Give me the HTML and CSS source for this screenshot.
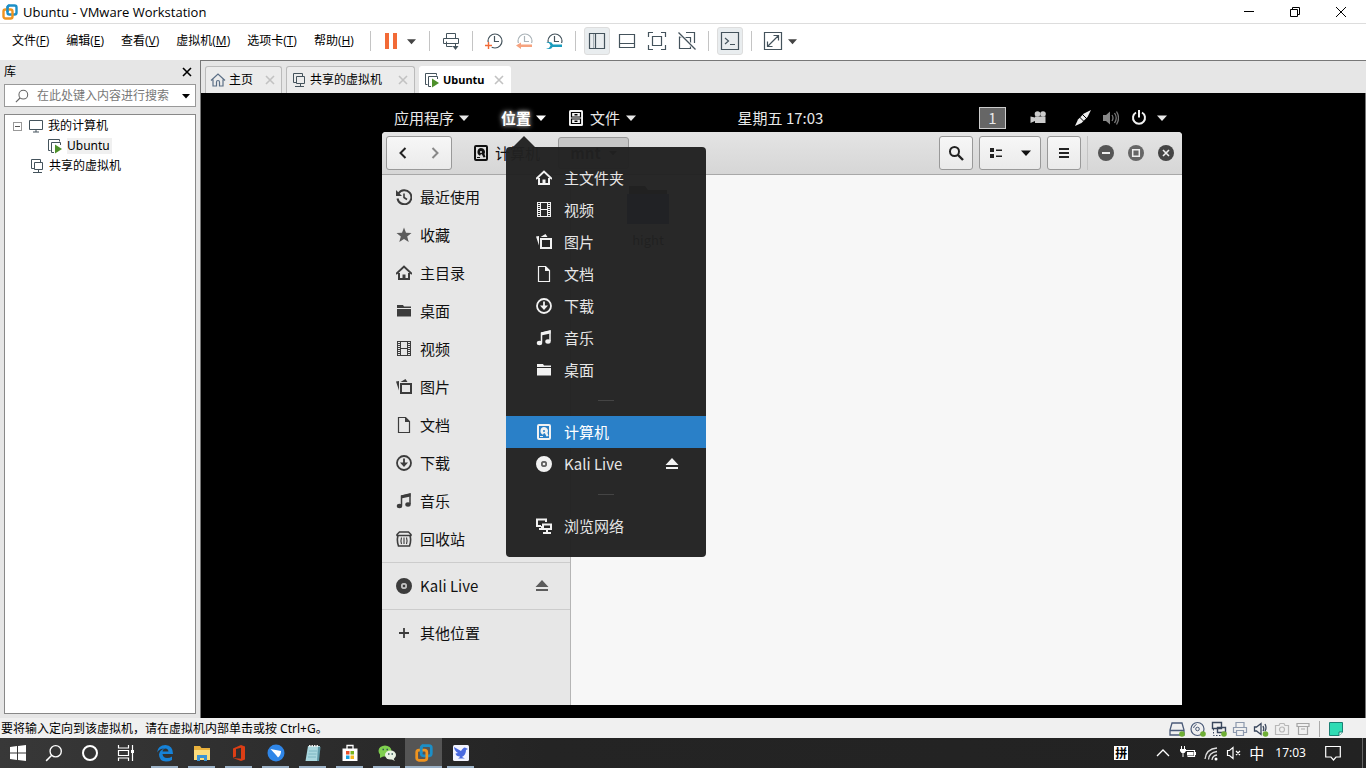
FILE: index.html
```html
<!DOCTYPE html>
<html lang="zh-CN">
<head>
<meta charset="utf-8">
<meta name="viewport" content="width=device-width, initial-scale=1">
<title>Ubuntu - VMware Workstation</title>
<link rel="stylesheet" href="styles.css">
</head>
<body>
<svg class="sprite" aria-hidden="true">
  <symbol id="i-vmware" viewBox="0 0 16 16"><rect x="5.5" y="1.5" width="9" height="9" rx="2" fill="none" stroke="#1c8fc7" stroke-width="2.4"/><rect x="1.5" y="5.5" width="9" height="9" rx="2" fill="none" stroke="#f0941e" stroke-width="2.4"/><path d="M5.5 8V3.500a2 2 0 0 1 2-2" fill="none" stroke="#1c8fc7" stroke-width="2.4"/></symbol>
  <symbol id="i-caret" viewBox="0 0 10 10"><path d="M0 2.500h10L5 8z" fill="currentColor"/></symbol>
  <symbol id="i-x" viewBox="0 0 10 10"><path d="M1 1l8 8M9 1L1 9" fill="none" stroke="currentColor" stroke-width="1.600"/></symbol>
  <symbol id="i-search" viewBox="0 0 16 16"><circle cx="9.500" cy="6.500" r="5" fill="none" stroke="currentColor" stroke-width="1.200"/><path d="M6 10l-5 5" stroke="currentColor" stroke-width="1.300"/></symbol>
  <symbol id="i-monitor" viewBox="0 0 16 16"><path d="M1.500 2.500h13v9h-13zM5 14h6M8 11.500v2.500" fill="none" stroke="#44535c"/></symbol>
  <symbol id="i-vmrun" viewBox="0 0 16 16"><path d="M3.500 12.500h-2v-11h11v2" fill="none" stroke="#44535c"/><path d="M7 14.500H4.500v-10h9V7" fill="none" stroke="#44535c"/><path d="M8 6.500l7 4.500-7 4.500z" fill="#4d8f2a"/></symbol>
  <symbol id="i-shared" viewBox="0 0 16 16"><path d="M5 10.500H2.500v-9h9V4" fill="none" stroke="#44535c"/><path d="M5.500 4.500h8v7h-8zM4 14.500h9M9.500 11.500v3" fill="none" stroke="#44535c"/></symbol>
  <symbol id="i-house" viewBox="0 0 16 16"><path d="M1 8.500L8 2l7 6.500M3 7.500V14h3.500v-4a1.500 1.500 0 0 1 3 0v4H13V7.500" fill="none" stroke="#5b6f86" stroke-width="1.200"/></symbol>
  <symbol id="i-clock" viewBox="0 0 20 20"><circle cx="11" cy="10" r="7" fill="none" stroke="currentColor" stroke-width="1.200"/><path d="M10.500 5v5.500H15" fill="none" stroke="currentColor" stroke-width="1.200"/></symbol>

  <symbol id="g-recent" viewBox="0 0 16 16"><path d="M2.500 4.500A7 7 0 1 1 1.500 9.500" fill="none" stroke="currentColor" stroke-width="2"/><path d="M0 1v6h6z" fill="currentColor"/><path d="M8 4.500V8.500l3 2" fill="none" stroke="currentColor" stroke-width="1.600"/></symbol>
  <symbol id="g-star" viewBox="0 0 16 16"><path d="M8 .5l2 5.200 5.500.3-4.300 3.500 1.500 5.500L8 12l-4.700 3 1.500-5.500L.5 6 6 5.700z" fill="currentColor"/></symbol>
  <symbol id="g-home" viewBox="0 0 16 16"><path d="M0 9l8-7.500L16 9M3 8v6h10V8" fill="none" stroke="currentColor" stroke-width="2"/><path d="M6.500 9.500h3V14h-3z" fill="currentColor"/></symbol>
  <symbol id="g-folder" viewBox="0 0 16 16"><path d="M1 2h6l1 1.500h7V5H1zM1 6h14v7.500H1z" fill="currentColor"/></symbol>
  <symbol id="g-video" viewBox="0 0 16 16"><path fill-rule="evenodd" d="M1 0h14v15H1zM5 1h6v6H5zM5 8h6v6H5zM2 1h2v1H2zM2 3h2v1H2zM2 5h2v1H2zM2 7h2v1H2zM2 9h2v1H2zM2 11h2v1H2zM2 13h2v1H2zM12 1h2v1h-2zM12 3h2v1h-2zM12 5h2v1h-2zM12 7h2v1h-2zM12 9h2v1h-2zM12 11h2v1h-2zM12 13h2v1h-2z" fill="currentColor"/></symbol>
  <symbol id="g-image" viewBox="0 0 16 16"><path d="M5 5h10v9H5z" fill="none" stroke="currentColor" stroke-width="2"/><path d="M0 2.500L3 2v9.500zM4.500 3l5-3 2 3z" fill="currentColor"/></symbol>
  <symbol id="g-doc" viewBox="0 0 16 16"><path d="M2.500.5h7l4 4v11h-11z" fill="none" stroke="currentColor" stroke-width="1.200"/><path d="M9 0v5h5z" fill="currentColor"/></symbol>
  <symbol id="g-down" viewBox="0 0 16 16"><circle cx="8" cy="8" r="7" fill="none" stroke="currentColor" stroke-width="1.800"/><path d="M8 3.500V10" stroke="currentColor" stroke-width="1.800"/><path d="M4 7.500h8L8 12z" fill="currentColor"/></symbol>
  <symbol id="g-music" viewBox="0 0 16 16"><path d="M5.500 12.500V3l8.500-2v10" fill="none" stroke="currentColor" stroke-width="1.500"/><path d="M5 2.500L14.500.5v3L5 5.500z" fill="currentColor"/><ellipse cx="3.500" cy="13" rx="2.700" ry="2.200" fill="currentColor"/><ellipse cx="12" cy="11.500" rx="2.700" ry="2.200" fill="currentColor"/></symbol>
  <symbol id="g-trash" viewBox="0 0 16 16"><path d="M3.500 1h9L15 3.500v1H1v-1z" fill="none" stroke="currentColor" stroke-width="1.500"/><path d="M2 5Q.5 9 2.500 15h11Q15.500 9 14 5" fill="none" stroke="currentColor" stroke-width="1.600"/><path d="M5.500 6.500q-1 3 0 6.500M8 6.500V13M10.500 6.500q1 3 0 6.500" fill="none" stroke="currentColor" stroke-width="1.100"/></symbol>
  <symbol id="g-disc" viewBox="0 0 16 16"><path fill-rule="evenodd" d="M8 0a8 8 0 1 1 0 16A8 8 0 0 1 8 0zm0 5a3 3 0 1 0 0 6 3 3 0 0 0 0-6z" fill="currentColor"/><circle cx="8" cy="8" r="3" fill="#999" opacity=".5"/><circle cx="8" cy="8" r="1.300" fill="currentColor"/></symbol>
  <symbol id="g-plus" viewBox="0 0 16 16"><path d="M3 8h10M8 3v10" stroke="currentColor" stroke-width="1.800"/></symbol>
  <symbol id="g-eject" viewBox="0 0 16 16"><path d="M8 2l6.500 7h-13zM2 11h12v2H2z" fill="currentColor"/></symbol>
  <symbol id="g-drive" viewBox="0 0 16 16"><rect x="2" y="1" width="12" height="14" rx="1" fill="none" stroke="currentColor" stroke-width="2"/><path fill-rule="evenodd" d="M8 3a4 4 0 0 1 3.500 6l1 3-2 .5L9 9.500 8 9l-1 1.700A4 4 0 0 1 8 3zm0 3a1 1 0 1 0 0 2 1 1 0 0 0 0-2z" fill="currentColor"/><path d="M4 12.500h3" stroke="currentColor"/></symbol>
  <symbol id="g-net" viewBox="0 0 16 16"><path d="M5 8H1V1.500h9V4M3 11h3V8" fill="none" stroke="currentColor" stroke-width="2"/><path d="M7 6.500h8V11H7zM11 11v3M7 15h8" fill="none" stroke="currentColor" stroke-width="2"/></symbol>
  <symbol id="g-cabinet" viewBox="0 0 16 16"><rect x="1" width="14" height="16" rx="1.500" fill="#f2f2f2"/><path d="M3.500 2.500h9v4.500h-9zM3.500 9h9v4.500h-9z" fill="none" stroke="#000" stroke-width="1.200"/><path d="M6.500 4.700h3M6.500 11.200h3" stroke="#000" stroke-width="1.400"/></symbol>
</svg>

<header class="titlebar">
  <svg class="ico16"><use href="#i-vmware"/></svg>
  <h1 class="title">Ubuntu - VMware Workstation</h1>
  <div class="caption">
    <button class="cap" aria-label="最小化"><svg viewBox="0 0 12 12"><path d="M1 5.500h10" stroke="#000"/></svg></button>
    <button class="cap" aria-label="还原"><svg viewBox="0 0 12 12"><path d="M1.500 3.500h7v7h-7zM3.500 3.500v-2h7v7h-2" fill="none" stroke="#000"/></svg></button>
    <button class="cap" aria-label="关闭"><svg viewBox="0 0 12 12"><path d="M1 1l10 10M11 1L1 11" stroke="#000"/></svg></button>
  </div>
</header>

<nav class="menubar" aria-label="主菜单">
  <div class="menus">
    <button class="menu">文件(<u>F</u>)</button>
    <button class="menu">编辑(<u>E</u>)</button>
    <button class="menu">查看(<u>V</u>)</button>
    <button class="menu">虚拟机(<u>M</u>)</button>
    <button class="menu">选项卡(<u>T</u>)</button>
    <button class="menu">帮助(<u>H</u>)</button>
  </div>
  <span class="sep"></span>
  <button class="tool" aria-label="挂起"><svg viewBox="0 0 20 20"><path d="M3 2h4v16H3zM11 2h4v16h-4z" fill="#f26a36"/></svg></button>
  <button class="drop" aria-label="电源选项"><svg><use href="#i-caret"/></svg></button>
  <span class="sep"></span>
  <button class="tool" aria-label="发送按键"><svg viewBox="0 0 20 20"><path d="M5.500 7V2.500h9V7M2.500 7.500h15v5h-15zM5.500 10.500v5h6M14.500 12v5" fill="none" stroke="#44535c"/><path d="M11.500 15h6l-3 4z" fill="#44535c"/></svg></button>
  <span class="sep"></span>
  <button class="tool" aria-label="拍摄快照"><svg viewBox="0 0 20 20" color="#44535c"><use href="#i-clock"/><path d="M1 14.500h7M4.500 11v7" stroke="#fff" stroke-width="4"/><path d="M1 14.500h7M4.500 11v7" stroke="#f26a36" stroke-width="1.400"/></svg></button>
  <button class="tool" aria-label="恢复快照"><svg viewBox="0 0 20 20" color="#aab3b8"><use href="#i-clock"/><path d="M2 12h18v7H2z" fill="#fff"/><path d="M2 14.500l5-3v2h11v2.500H7v2z" fill="#f6a37f"/></svg></button>
  <button class="tool" aria-label="管理快照"><svg viewBox="0 0 20 20" color="#44535c"><use href="#i-clock"/><path d="M2 12h18v8H2z" fill="#fff"/><path d="M2 12h3l1.500 2.500L5 17H2q5 2.500 6.500-1H18v-2.500H9Q7 9.500 2 12z" fill="#1a9cbd"/></svg></button>
  <span class="sep"></span>
  <button class="tool on" aria-label="显示库"><svg viewBox="0 0 20 20"><path d="M2.500 2.500h15v15h-15zM8.500 2.500v15" fill="none" stroke="#44535c" stroke-width="1.200"/><path d="M6.500 3v14" stroke="#a9b3b8"/></svg></button>
  <button class="tool" aria-label="缩略图栏"><svg viewBox="0 0 20 20"><path d="M2.500 3.500h15v13h-15zM2.500 12.500h15" fill="none" stroke="#44535c" stroke-width="1.200"/></svg></button>
  <button class="tool" aria-label="全屏"><svg viewBox="0 0 20 20"><path d="M1.500 6V1.500H6M14 1.500h4.500V6M18.500 14v4.500H14M6 18.500H1.500V14M5.500 5.500h9v9h-9z" fill="none" stroke="#44535c" stroke-width="1.200"/></svg></button>
  <button class="tool" aria-label="Unity 模式"><svg viewBox="0 0 20 20"><path d="M9 1.500h8.500V12M6.500 6h-4v11.500h11v-4M7 6.500h6.500V12" fill="none" stroke="#44535c" stroke-width="1.200"/><path d="M1.500 1.500l17 17" stroke="#fff" stroke-width="3"/><path d="M1.500 1.500l17 17" stroke="#44535c" stroke-width="1.200"/></svg></button>
  <span class="sep"></span>
  <button class="tool on" aria-label="控制台视图"><svg viewBox="0 0 20 20"><path d="M1.500 1.500h17v17h-17z" fill="none" stroke="#44535c" stroke-width="1.200"/><path d="M5 7l3.500 3L5 13M10 13.500h5" fill="none" stroke="#44535c" stroke-width="1.200"/></svg></button>
  <span class="sep"></span>
  <button class="tool" aria-label="自由拉伸"><svg viewBox="0 0 20 20"><path d="M1.500 1.500h17v17h-17zM5 15L15 5M10.500 4.500h5v5M4.500 10.500v5h5" fill="none" stroke="#44535c" stroke-width="1.200"/></svg></button>
  <button class="drop" aria-label="拉伸选项"><svg><use href="#i-caret"/></svg></button>
</nav>

<main class="work">
  <aside class="library">
    <div class="lib-head"><h2 class="lib-title">库</h2><button class="plain" aria-label="关闭库"><svg class="ico10"><use href="#i-x"/></svg></button></div>
    <div class="lib-search">
      <svg class="ico16"><use href="#i-search"/></svg>
      <input type="text" aria-label="搜索" placeholder="在此处键入内容进行搜索">
      <button class="plain" aria-label="搜索选项"><svg class="ico8"><use href="#i-caret"/></svg></button>
    </div>
    <ul class="tree">
      <li class="node"><button class="fold" aria-label="折叠"></button><svg class="ico16"><use href="#i-monitor"/></svg><span>我的计算机</span></li>
      <li class="node child"><svg class="ico16"><use href="#i-vmrun"/></svg><span class="picked">Ubuntu</span></li>
      <li class="node peer"><svg class="ico16"><use href="#i-shared"/></svg><span>共享的虚拟机</span></li>
    </ul>
  </aside>

  <section class="console">
    <div class="tabs">
      <div class="tab home"><svg class="ico16"><use href="#i-house"/></svg><span>主页</span><button class="plain" aria-label="关闭主页"><svg class="ico10"><use href="#i-x"/></svg></button></div>
      <div class="tab share"><svg class="ico16"><use href="#i-shared"/></svg><span>共享的虚拟机</span><button class="plain" aria-label="关闭共享的虚拟机"><svg class="ico10"><use href="#i-x"/></svg></button></div>
      <div class="tab current"><svg class="ico16"><use href="#i-vmrun"/></svg><span>Ubuntu</span><button class="plain" aria-label="关闭 Ubuntu"><svg class="ico10"><use href="#i-x"/></svg></button></div>
    </div>
    <div class="screen">
      <div class="guest">
        <div class="topbar">
          <div class="top-left">
            <button class="top-btn">应用程序<svg class="ico10"><use href="#i-caret"/></svg></button>
            <button class="top-btn open">位置<svg class="ico10"><use href="#i-caret"/></svg></button>
            <button class="top-btn app"><svg class="ico16"><use href="#g-cabinet"/></svg>文件<svg class="ico10"><use href="#i-caret"/></svg></button>
          </div>
          <div class="clock">星期五 17:03</div>
          <div class="top-right">
            <button class="workspace">1</button>
            <svg class="ico16 cam" viewBox="0 0 16 16"><circle cx="7.500" cy="4" r="2.800" fill="#ccc"/><circle cx="13" cy="4" r="2.800" fill="#ccc"/><path d="M5 6.500h10.500V13H5v-2l-4.500 2V6.500l4.500 1z" fill="#ccc"/></svg>
            <svg class="ico16" viewBox="0 0 16 16"><path d="M0 16l3-6.500L6 6.500l3-3L16 0l-3.500 7L9.500 10l-3 3z" fill="#eee"/><path d="M4.500 7l4.500 4.500M7.500 4.500L12 9" stroke="#000"/></svg>
            <svg class="ico16" viewBox="0 0 16 16"><path d="M0 5h3l4-3.500v13L3 11H0z" fill="#888"/><path d="M9 5q2 3 0 6M11.500 3q3.500 5 0 10M13.500 1.500q4 6.500 0 13" fill="none" stroke="#777" stroke-width="1.300"/></svg>
            <svg class="ico16" viewBox="0 0 16 16"><path d="M5 2.500a6 6 0 1 0 6 0M8 0v7.500" fill="none" stroke="#f2f2f2" stroke-width="2"/></svg>
            <svg class="ico10 end"><use href="#i-caret"/></svg>
          </div>
        </div>

        <div class="window">
          <div class="win-head">
            <div class="group">
              <button class="wbtn" aria-label="后退"><svg class="ico16" viewBox="0 0 16 16"><path d="M10.500 3l-5 5 5 5" fill="none" stroke="#222" stroke-width="2"/></svg></button>
              <button class="wbtn" aria-label="前进"><svg class="ico16" viewBox="0 0 16 16"><path d="M5.500 3l5 5-5 5" fill="none" stroke="#888" stroke-width="2"/></svg></button>
            </div>
            <div class="path">
              <button class="crumb"><svg class="ico16"><use href="#g-drive"/></svg>计算机</button>
              <button class="crumb here">mnt<svg class="ico8"><use href="#i-caret"/></svg></button>
            </div>
            <div class="win-tools">
              <div class="group"><button class="wbtn" aria-label="查找"><svg class="ico16" viewBox="0 0 16 16"><circle cx="6.500" cy="6.500" r="4.500" fill="none" stroke="#222" stroke-width="2"/><path d="M10 10l5 5" stroke="#222" stroke-width="2.400"/></svg></button></div>
              <div class="group">
                <button class="wbtn" aria-label="列表视图"><svg class="ico16" viewBox="0 0 16 16"><path d="M2 3h4v4H2zM2 9h4v4H2zM8 4.500h6V6H8zM8 10.500h6V12H8z" fill="#222"/></svg></button>
                <button class="wbtn narrow" aria-label="视图选项"><svg class="ico10"><use href="#i-caret"/></svg></button>
              </div>
              <div class="group"><button class="wbtn" aria-label="菜单"><svg class="ico16" viewBox="0 0 16 16"><path d="M3 4h10M3 8h10M3 12h10" stroke="#222" stroke-width="2"/></svg></button></div>
              <span class="win-sep"></span>
              <div class="win-ctl">
                <button class="plain" aria-label="最小化"><svg class="ico16" viewBox="0 0 16 16"><circle cx="8" cy="8" r="8" fill="#555"/><path d="M4 8h8" stroke="#eee" stroke-width="2"/></svg></button>
                <button class="plain" aria-label="最大化"><svg class="ico16" viewBox="0 0 16 16"><circle cx="8" cy="8" r="8" fill="#666"/><path d="M4.700 4.700h6.600v6.600H4.700z" fill="none" stroke="#eee" stroke-width="1.500"/></svg></button>
                <button class="plain" aria-label="关闭"><svg class="ico16" viewBox="0 0 16 16"><circle cx="8" cy="8" r="8" fill="#444"/><path d="M5 5l6 6M11 5l-6 6" stroke="#eee" stroke-width="1.600"/></svg></button>
              </div>
            </div>
          </div>
          <div class="win-body">
            <ul class="places">
              <li><svg class="ico16"><use href="#g-recent"/></svg>最近使用</li>
              <li><svg class="ico16 pale"><use href="#g-star"/></svg>收藏</li>
              <li><svg class="ico16"><use href="#g-home"/></svg>主目录</li>
              <li><svg class="ico16"><use href="#g-folder"/></svg>桌面</li>
              <li><svg class="ico16"><use href="#g-video"/></svg>视频</li>
              <li><svg class="ico16"><use href="#g-image"/></svg>图片</li>
              <li><svg class="ico16"><use href="#g-doc"/></svg>文档</li>
              <li><svg class="ico16"><use href="#g-down"/></svg>下载</li>
              <li><svg class="ico16"><use href="#g-music"/></svg>音乐</li>
              <li><svg class="ico16"><use href="#g-trash"/></svg>回收站</li>
              <li class="ruled"><svg class="ico16"><use href="#g-disc"/></svg>Kali Live<button class="plain eject pale" aria-label="弹出"><svg class="ico16"><use href="#g-eject"/></svg></button></li>
              <li class="ruled"><svg class="ico16"><use href="#g-plus"/></svg>其他位置</li>
            </ul>
            <div class="files">
              <figure class="file"><svg viewBox="0 0 42 38"><path d="M2 0h16l3 4h19v6H2z" fill="#222"/><path d="M0 8h42v30H0z" fill="#2a3a90"/></svg><figcaption>hight</figcaption></figure>
            </div>
          </div>
        </div>

        <div class="popup">
          <ul class="popup-list">
            <li><svg class="ico16"><use href="#g-home"/></svg>主文件夹</li>
            <li><svg class="ico16"><use href="#g-video"/></svg>视频</li>
            <li><svg class="ico16"><use href="#g-image"/></svg>图片</li>
            <li><svg class="ico16"><use href="#g-doc"/></svg>文档</li>
            <li><svg class="ico16"><use href="#g-down"/></svg>下载</li>
            <li><svg class="ico16"><use href="#g-music"/></svg>音乐</li>
            <li><svg class="ico16"><use href="#g-folder"/></svg>桌面</li>
            <li class="split" role="separator"></li>
            <li class="hot"><svg class="ico16"><use href="#g-drive"/></svg>计算机</li>
            <li><svg class="ico16"><use href="#g-disc"/></svg>Kali Live<button class="plain eject" aria-label="弹出"><svg class="ico16"><use href="#g-eject"/></svg></button></li>
            <li class="split" role="separator"></li>
            <li><svg class="ico16"><use href="#g-net"/></svg>浏览网络</li>
          </ul>
        </div>
      </div>
    </div>
  </section>
</main>

<footer class="status">
  <p class="hint">要将输入定向到该虚拟机，请在虚拟机内部单击或按 Ctrl+G。</p>
  <div class="devices">
    <svg class="ico16" viewBox="0 0 16 16"><path d="M3 2h10l2 7v5H1V9zM1 9.500h14" fill="none" stroke="#4a5a78" stroke-width="1.300"/><circle cx="13" cy="13" r="2.800" fill="#6fae35"/></svg>
    <svg class="ico16" viewBox="0 0 16 16"><circle cx="7.500" cy="8" r="6.500" fill="none" stroke="#4a5a78" stroke-width="1.200"/><circle cx="7.500" cy="8" r="1.800" fill="none" stroke="#4a5a78"/><path d="M3.500 7q.5-2.500 3-3.500" fill="none" stroke="#4a5a78"/><circle cx="13" cy="13" r="2.800" fill="#6fae35"/></svg>
    <svg class="ico16" viewBox="0 0 16 16"><path d="M1.500 1.500h9v6h-9zM6.500 6.500h8v5h-8z" fill="#f0f0f0" stroke="#39465c" stroke-width="1.400"/><path d="M2.500 8v6.500H12" fill="none" stroke="#39465c" stroke-dasharray="1.500 1.500"/><circle cx="13" cy="13" r="2.800" fill="#6fae35"/></svg>
    <svg class="ico16" viewBox="0 0 16 16"><path d="M4 6V1.500h8V6M4 11.500H1.500v-5h13v5H12M4.500 9.500h7v5h-7z" fill="none" stroke="#8d99ad" stroke-width="1.200"/></svg>
    <svg class="ico16" viewBox="0 0 16 16"><path d="M1.500 6h2L8 2.500v11L3.500 10h-2zM10 5q1.500 3 0 5M12 3q2 4 0 7" fill="none" stroke="#39465c" stroke-width="1.300"/><circle cx="12.500" cy="13" r="2.800" fill="#6fae35"/></svg>
    <svg class="ico16" viewBox="0 0 16 16"><path d="M1.500 4.500H5l1-2h4l1 2h3.500v9h-13z" fill="none" stroke="#b8b8b8" stroke-width="1.200"/><circle cx="8" cy="8.500" r="2.500" fill="none" stroke="#b8b8b8" stroke-width="1.200"/></svg>
    <svg class="ico16" viewBox="0 0 16 16"><path d="M2 2.500h12v3H2zM3.500 5.500h9v8h-9zM6 8h4" fill="none" stroke="#a5a5a5" stroke-width="1.200"/></svg>
    <span class="dev-sep"></span>
    <svg class="ico16" viewBox="0 0 16 16"><path d="M1.500 1.500h13V11L11 14.500H1.500z" fill="#2fdcb4" stroke="#1b7f74"/><path d="M14.500 11H11v3.500" fill="#fff" stroke="#1b7f74"/></svg>
  </div>
</footer>

<nav class="taskbar" aria-label="任务栏">
  <div class="sys">
    <button class="sysbtn" aria-label="开始"><svg class="ico18" viewBox="0 0 18 18"><path d="M1 3l7-1v6.500H1zM9 2l8-1v7.500H9zM1 9.500h7V16l-7-1zM9 9.500h8V17l-8-1z" fill="#fff"/></svg></button>
    <button class="sysbtn" aria-label="搜索"><svg class="ico18"><use href="#i-search"/></svg></button>
    <button class="sysbtn" aria-label="Cortana"><svg class="ico18" viewBox="0 0 18 18"><circle cx="9" cy="9" r="7" fill="none" stroke="#fff" stroke-width="2"/></svg></button>
    <button class="sysbtn" aria-label="任务视图"><svg class="ico18" viewBox="0 0 18 18"><path d="M1.500 1v3h10V1M1.500 17v-3h10v3M1.500 6.500h10v5h-10zM15.500 1v16" fill="none" stroke="#fff" stroke-width="1.200"/><path d="M14 6h3v3h-3z" fill="#fff"/></svg></button>
  </div>
  <div class="apps">
    <button class="app-btn" aria-label="Edge"><svg class="ico18" viewBox="0 0 18 18"><path d="M1 8.500Q2 1 9.500 1 17 1.500 17 10H6.500q.5 4 4.500 4 3 0 5-1.500V16q-2.500 1.500-6 1.500-7-.5-7-7 .5-4 5-6Q3.500 4.500 1 8.500zM6.500 7.500h6q-.5-3-3-3t-3 3z" fill="#1682d8"/></svg></button>
    <button class="app-btn" aria-label="资源管理器"><svg class="ico18" viewBox="0 0 18 18"><path d="M1 2h6l1.500 2H17v12H1z" fill="#e9b13c"/><path d="M1 6h16v10H1z" fill="#fbdc7c"/><path d="M4 17v-6h10v6h-3v-3H7v3z" fill="#3b94d4"/></svg></button>
    <button class="app-btn" aria-label="Office"><svg class="ico18" viewBox="0 0 18 18"><path fill-rule="evenodd" d="M3 4.500L11 1l4 1.500v13L11 17l-8-3 8 .8V3.800L6 5v7.500L3 13.700z" fill="#dc3e15"/></svg></button>
    <button class="app-btn" aria-label="浏览器"><svg class="ico18" viewBox="0 0 18 18"><circle cx="9" cy="9" r="8.500" fill="#2f86e8"/><path d="M3.500 5L14 7q0 4-3 6.500L9 11z" fill="#fff"/></svg></button>
    <button class="app-btn" aria-label="记事本"><svg class="ico18" viewBox="0 0 18 18"><path d="M4 2h12l-2 15H1.500z" fill="#a9d7de"/><path d="M14 3h2.500L15 17h-2z" fill="#5d98a6"/><path d="M5 2h10" stroke="#eee" stroke-width="2" stroke-dasharray="1.500 1"/><path d="M5 7h8M4.500 10h8M4 13h8" stroke="#7db6c2"/></svg></button>
    <button class="app-btn" aria-label="应用商店"><svg class="ico18" viewBox="0 0 18 18"><path d="M6 5V1.500h6V5" fill="none" stroke="#fff" stroke-width="1.300"/><path d="M1.500 4.500h15V17h-15z" fill="#fff"/><path d="M5 7h3.500v3.500H5z" fill="#e8502a"/><path d="M9.500 7H13v3.500H9.500z" fill="#7ab51d"/><path d="M5 11.500h3.500V15H5z" fill="#159fe0"/><path d="M9.500 11.500H13V15H9.500z" fill="#f5b81c"/></svg></button>
    <button class="app-btn" aria-label="微信"><svg class="ico18" viewBox="0 0 18 18"><ellipse cx="7" cy="7" rx="6.500" ry="5.500" fill="#7fd04f"/><path d="M2 10v4l4-2z" fill="#7fd04f"/><ellipse cx="12.500" cy="11" rx="5.500" ry="4.500" fill="#e9f2e4"/><path d="M15 14l2 3-4-2z" fill="#e9f2e4"/><path d="M4.500 5.500h1.500M8.500 5.500H10M10 10h1.500M13.500 10H15" stroke="#355" stroke-width="1.400"/></svg></button>
    <button class="app-btn active" aria-label="VMware Workstation"><svg class="ico18"><use href="#i-vmware"/></svg></button>
    <button class="app-btn" aria-label="迅雷"><svg class="ico18" viewBox="0 0 18 18"><rect x="1" y="1" width="16" height="16" rx="1.500" fill="#f2f4ff"/><path d="M2 3l7 4q3-5 5-3l2 1-2 1q0 5-4 7l3 1.500H6q2-1 2-2-4 0-4.500-3L6 9Q2.500 7 2 3z" fill="#4a6ae0"/></svg></button>
  </div>
  <div class="tray">
    <button class="pin">拼</button>
    <svg class="ico16 up" viewBox="0 0 16 16"><path d="M2 11l6-6 6 6" fill="none" stroke="#fff" stroke-width="1.300"/></svg>
    <svg class="ico16" viewBox="0 0 16 16"><path d="M5.500 5.500h9v6h-7M15.500 7v3" fill="none" stroke="#fff" stroke-width="1.200"/><path d="M7 7h6.500v3.500H7z" fill="#fff"/><path d="M1.500 1v3M4.500 1v3M3 8v4" stroke="#fff"/><path d="M0 4h6v2L4.500 8h-3L0 6z" fill="#fff"/></svg>
    <svg class="ico16" viewBox="0 0 16 16"><path d="M2 14Q3 4 14 3M5.500 14.500Q6 7.500 14 6.500M9 15Q9.500 10.500 14 10" fill="none" stroke="#ddd" stroke-width="1.300"/><circle cx="13" cy="14" r="1.500" fill="#fff"/></svg>
    <svg class="ico16" viewBox="0 0 16 16"><path d="M1.500 5.500h2L7 2.500v11l-3.500-3h-2zM10 6l4 4M14 6l-4 4" fill="none" stroke="#fff" stroke-width="1.200"/></svg>
    <span class="ime">中</span>
    <time class="time">17:03</time>
    <svg class="ico16 note" viewBox="0 0 16 16"><path d="M.7 1.500h14.600v10.500H11L8.500 15 6 12H.7z" fill="none" stroke="#fff" stroke-width="1.200"/></svg>
    <span class="peek"></span>
  </div>
</nav>
</body>
</html>
```
FILE: styles.css
```css
* { box-sizing: border-box; }

body {
  margin: 0;
  min-height: 100vh;
  display: flex;
  flex-direction: column;
  background: #fff;
  color: #000;
  font: 12px/16px "Noto Sans", "Noto Sans CJK SC", sans-serif;
}

button {
  margin: 0;
  padding: 0;
  border: 0;
  background: none;
  color: inherit;
  font: inherit;
  display: inline-flex;
  align-items: center;
  justify-content: center;
}

h1, h2, p, ul, figure { margin: 0; padding: 0; font: inherit; }
ul { list-style: none; }
svg { flex: none; display: block; }
.sprite { position: absolute; width: 0; height: 0; }
.ico8 { width: 8px; height: 8px; }
.ico10 { width: 10px; height: 10px; }
.ico16 { width: 16px; height: 16px; }
.ico18 { width: 18px; height: 18px; }
.plain { flex: none; }

/* Title bar */
.titlebar { display: flex; align-items: center; height: 23px; padding: 0 2px; gap: 5px; }
.title { flex: 1; font: 13px/16px "Open Sans", sans-serif; }
.caption { display: flex; }
.cap { width: 46px; height: 23px; }
.cap svg { width: 12px; height: 12px; }

/* Menus and toolbar */
.menubar { display: flex; align-items: center; height: 37px; padding: 0 0 2px 12px; border-top: 1px solid #ddd; }
.menus { display: flex; gap: 17px; width: 358px; font-family: "Open Sans", "Noto Sans CJK SC", sans-serif; }
.menu { white-space: nowrap; }
.sep { width: 1px; height: 20px; margin: 0 6px; background: #c4c4c4; flex: none; }
.menus + .sep { margin-left: 0; }
.tool { width: 26px; height: 28px; margin: 0 2px; border-radius: 3px; flex: none; }
.tool.on { background: #e9edef; border: 1px solid #ddd; }
.tool svg { width: 20px; height: 20px; flex: none; }
.drop { width: 16px; height: 28px; color: #444; justify-content: flex-start; }
.drop svg { width: 9px; height: 9px; }

/* Library pane */
.work { flex: 1; display: flex; background: #e6e6e6; }
.library { width: 201px; flex: none; display: flex; flex-direction: column; padding: 0 4px 4px; border-right: 1px solid #777; }
.lib-head { display: flex; align-items: center; justify-content: space-between; height: 24px; padding-right: 4px; }
.lib-search { display: flex; align-items: center; gap: 8px; height: 23px; padding: 0 5px 0 10px; background: #fff; border: 1px solid #999; color: #666; }
.lib-search input { flex: 1; min-width: 0; padding: 0; border: 0; outline: 0; background: none; font: inherit; }
.lib-search input::placeholder { color: #777; opacity: 1; }
.lib-search .ico16 { width: 14px; height: 14px; }
.lib-search .plain { color: #000; }
.tree { flex: 1; margin-top: 7px; padding-top: 1px; background: #fff; border: 1px solid #888; }
.node { display: flex; align-items: center; gap: 4px; height: 20px; padding-left: 8px; }
.fold { width: 9px; height: 9px; margin-right: 2px; border: 1px solid #999; flex: none; }
.fold::before { content: ""; width: 5px; height: 1px; background: #555; }
.child { padding-left: 42px; }
.peer { padding-left: 24px; }
.picked { padding-right: 2px; background: #f0f0f0; }

/* Tabs */
.console { flex: 1; min-width: 0; display: flex; flex-direction: column; border-top: 1px solid #777; }
.tabs { display: flex; align-items: flex-end; gap: 4px; height: 32px; padding-left: 4px; }
.tab { display: flex; align-items: center; gap: 3px; height: 27px; padding: 0 6px 0 4px; background: #ececec; border: 1px solid #bbb; border-bottom: 0; border-radius: 3px 3px 0 0; white-space: nowrap; }
.tab span { flex: 1; }
.tab .plain { color: #c2c2c2; }
.tab.home { width: 77px; }
.tab.share { width: 129px; }
.tab.current { width: 92px; background: #fff; border-color: #fff; font-weight: 700; font-size: 11px; }

/* Virtual display */
.screen { flex: 1; display: flex; align-items: center; justify-content: center; padding: 0 2px 2px 0; background: #000; border-right: 1px solid #777; }
.guest {
  position: relative;
  width: 800px;
  max-width: 100%;
  height: 600px;
  display: flex;
  flex-direction: column;
  font: 15px/20px "Noto Sans CJK SC", sans-serif;
}
.topbar { display: grid; grid-template-columns: 1fr auto 1fr; align-items: center; height: 27px; padding: 0 15px 0 12px; color: #e8e8e8; }
.top-left, .top-right { display: flex; align-items: center; }
.top-left { gap: 32px; }
.top-btn { gap: 5px; }
.top-btn.open { text-shadow: 0 0 5px #fff; font-weight: 700; color: #fff; }
.top-btn.app { gap: 6px; margin-left: -10px; }
.top-right { justify-content: flex-end; gap: 12px; }
.workspace { width: 27px; height: 22px; margin-right: 12px; background: #666; border: 1px solid #ccc; }
.cam { margin-right: 17px; }
.end { margin-left: -2px; }

.window { flex: 1; display: flex; flex-direction: column; background: #f7f7f7; border-radius: 4px 4px 0 0; color: #111; overflow: hidden; }
.win-head { display: flex; align-items: center; height: 43px; padding: 0 8px 0 4px; background: linear-gradient(#e4e4e4, #d6d6d6); border-bottom: 1px solid #a8a8a8; }
.group { display: flex; height: 34px; background: linear-gradient(#f7f7f7, #eaeaea); border: 1px solid #999; border-radius: 3px; }
.wbtn { width: 32px; }
.wbtn.narrow { width: 28px; }
.path { flex: 1; display: flex; align-items: center; padding-left: 21px; gap: 18px; }
.crumb { gap: 6px; height: 32px; }
.crumb.here { width: 71px; gap: 8px; font-weight: 700; background: #c6c6c6; border: 1px solid #999; border-radius: 3px; }
.win-tools { display: flex; align-items: center; gap: 6px; }
.win-sep { width: 1px; height: 34px; background: #c4c4c4; }
.win-ctl { display: flex; gap: 14px; padding-left: 4px; }

.win-body { flex: 1; display: flex; }
.places { width: 189px; flex: none; padding-top: 3px; background: #e7e7e7; border-right: 1px solid #b5b5b5; }
.places li { display: flex; align-items: center; gap: 8px; height: 38px; padding: 0 20px 0 14px; }
.places svg { color: #3c3c3c; }
.places .pale, .places .pale svg { color: #5c5c5c; }
.places .ruled { height: 47px; margin-top: 4px; border-top: 1px solid #ccc; }
.places .ruled + .ruled { margin-top: 0; }
.eject { margin-left: auto; }
.files { flex: 1; padding: 11px 56px; }
.file { width: 42px; display: flex; flex-direction: column; align-items: center; gap: 6px; font-size: 13px; }
.file svg { width: 42px; height: 38px; }

/* Places menu, hanging over the file window */
.popup { position: absolute; left: 124px; top: 42px; width: 200px; padding: 15px 0; background: rgba(33, 33, 33, .97); border-radius: 4px; color: #e6e6e6; }
.popup::before { content: ""; position: absolute; left: 7px; top: -11px; border: 11px solid transparent; border-top: 0; border-bottom-color: #282828; }
.popup-list li { display: flex; align-items: center; gap: 12px; height: 32px; padding: 0 26px 0 30px; }
.popup-list svg { color: #f2f2f2; }
.popup-list .split { height: 30px; padding: 0; justify-content: center; }
.split::before { content: ""; width: 16px; height: 1px; background: #444; }
.popup-list .hot { background: #2a80c8; color: #fff; }

/* Host status line */
.status { display: flex; align-items: center; justify-content: space-between; height: 20px; padding: 2px 22px 0 1px; background: #f0f0f0; }
.devices { display: flex; align-items: center; gap: 5px; }
.dev-sep { width: 1px; height: 16px; margin: 0 3px; background: #aaa; }

/* Task bar */
.taskbar { display: flex; height: 30px; background: linear-gradient(90deg, #383838, #242424 40%, #222); color: #fff; }
.sys, .apps, .tray { display: flex; align-items: stretch; }
.sysbtn { width: 36px; }
.apps { margin-left: 2px; }
.app-btn { width: 37px; position: relative; }
.app-btn::after { content: ""; position: absolute; left: 5px; right: 5px; bottom: 0; height: 2px; background: #9db3c8; }
.app-btn.active { background: #555; }
.app-btn.active::after { left: 0; right: 0; }
.tray { margin-left: auto; align-items: center; gap: 7px; }
.pin { width: 14px; height: 14px; background: #fff; color: #000; font: 700 12px/14px "Noto Sans CJK SC", sans-serif; }
.up { margin: 0 2px 0 20px; }
.ime { font: 15px/20px "Noto Sans CJK SC", sans-serif; }
.time { margin-left: 4px; }
.note { margin-left: 12px; }
.peek { align-self: stretch; width: 4px; margin-left: 14px; border-left: 1px solid #666; }
```
